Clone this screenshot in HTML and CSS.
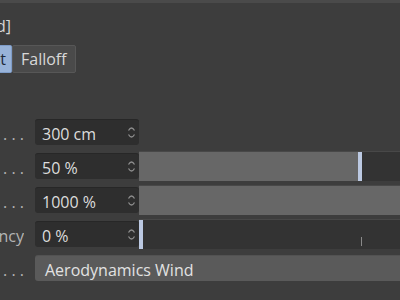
FILE: index.html
```html
<!DOCTYPE html>
<html lang="en">
<head>
  <meta charset="UTF-8">
  <meta name="viewport" content="width=device-width, initial-scale=1.0">
  <title>Wind Object</title>
  <link rel="stylesheet" href="styles.css">
</head>
<body>
  <div class="topbar"></div>

  <div class="title"><span>Wind Object [Wind]</span></div>

  <div class="tabs">
    <div class="tab active"><span>Object</span></div>
    <div class="tab">Falloff</div>
  </div>

  <div class="rows">
    <div class="row">
      <div class="label"><span>Size . . . . . . .</span></div>
      <div class="field">
        <span>300 cm</span>
        <svg class="spin" width="9" height="17" viewBox="0 0 9 17"><path d="M1.5 6.5 Q4.5 1.5 7.5 6.5 M1.5 10.5 Q4.5 15.5 7.5 10.5" fill="none" stroke="#8e8e8e" stroke-width="1.3"/></svg>
      </div>
    </div>

    <div class="row">
      <div class="label"><span>Turbulence . . .</span></div>
      <div class="field">
        <span>50 %</span>
        <svg class="spin" width="9" height="17" viewBox="0 0 9 17"><path d="M1.5 6.5 Q4.5 1.5 7.5 6.5 M1.5 10.5 Q4.5 15.5 7.5 10.5" fill="none" stroke="#8e8e8e" stroke-width="1.3"/></svg>
      </div>
      <div class="slider">
        <div class="fill" style="width: 219px"></div>
        <div class="knob"></div>
      </div>
    </div>

    <div class="row">
      <div class="label"><span>Scale . . . . . .</span></div>
      <div class="field">
        <span>1000 %</span>
        <svg class="spin" width="9" height="17" viewBox="0 0 9 17"><path d="M1.5 6.5 Q4.5 1.5 7.5 6.5 M1.5 10.5 Q4.5 15.5 7.5 10.5" fill="none" stroke="#8e8e8e" stroke-width="1.3"/></svg>
      </div>
      <div class="slider">
        <div class="fill" style="width: 100%"></div>
      </div>
    </div>

    <div class="row">
      <div class="label"><span>Transparency</span></div>
      <div class="field">
        <span>0 %</span>
        <svg class="spin" width="9" height="17" viewBox="0 0 9 17"><path d="M1.5 6.5 Q4.5 1.5 7.5 6.5 M1.5 10.5 Q4.5 15.5 7.5 10.5" fill="none" stroke="#8e8e8e" stroke-width="1.3"/></svg>
      </div>
      <div class="slider">
        <div class="knob"></div>
        <div class="tick"></div>
      </div>
    </div>

    <div class="row">
      <div class="label"><span>Mode . . . . . .</span></div>
      <div class="field wide">
        <span>Aerodynamics Wind</span>
      </div>
    </div>
  </div>
</body>
</html>
```

FILE: styles.css
```css
body {
  margin: 0;
  width: 400px;
  height: 300px;
  overflow: hidden;
  background: #3d3d3d;
  font-family: 'Open Sans', 'Noto Sans', sans-serif;
  font-size: 16px;
  color: #d6d6d6;
}

.topbar {
  height: 3px;
  background: #4a4a4a;
}

.title {
  margin-top: 13px;
  width: 11px;
  height: 20px;
  line-height: 20px;
  display: flex;
  justify-content: flex-end;
  overflow: hidden;
  white-space: nowrap;
}

.tabs {
  margin-top: 9px;
  display: flex;
  height: 28px;
}

.tab {
  display: flex;
  align-items: center;
  padding: 0 8px;
  background: #4a4a4a;
  border: 1px solid #575757;
  border-radius: 2px;
  color: #d8d8d8;
  white-space: nowrap;
}

.tab.active {
  width: 6px;
  padding: 0 5px 0 0;
  justify-content: flex-end;
  overflow: hidden;
  background: #98b3d9;
  border-color: #7e9cc8;
  border-left: none;
  color: #1f2a3a;
  border-radius: 0 2px 2px 0;
}

.rows {
  margin-top: 46px;
  display: flex;
  flex-direction: column;
  gap: 8px;
}

.row {
  display: flex;
  align-items: center;
  height: 26px;
}

.label {
  width: 24px;
  margin-right: 11px;
  padding-top: 4px;
  display: flex;
  justify-content: flex-end;
  overflow: hidden;
  white-space: nowrap;
  color: #b4b4b4;
}

.field {
  width: 104px;
  height: 26px;
  box-sizing: border-box;
  display: flex;
  align-items: center;
  justify-content: space-between;
  padding: 2px 3px 0 7px;
  background: #2e2e2e;
  border-top: 1px solid #272727;
  border-radius: 3px;
  color: #dcdcdc;
}

.field.wide {
  flex: 1;
  padding-left: 10px;
  background: #5a5a5a;
  border-top-color: #525252;
  color: #e2e2e2;
  border-radius: 3px 0 0 3px;
}

.spin {
  display: block;
  margin-top: -2px;
}

.slider {
  position: relative;
  flex: 1;
  height: 30px;
  display: flex;
  background: #333333;
  border-top: 1px solid #484848;
  box-sizing: border-box;
}

.fill {
  background: #676767;
}

.knob {
  width: 4px;
  background: #bcc9e2;
}

.tick {
  position: absolute;
  left: 222px;
  top: 17px;
  width: 1px;
  height: 9px;
  background: #8a8a8a;
}
```
